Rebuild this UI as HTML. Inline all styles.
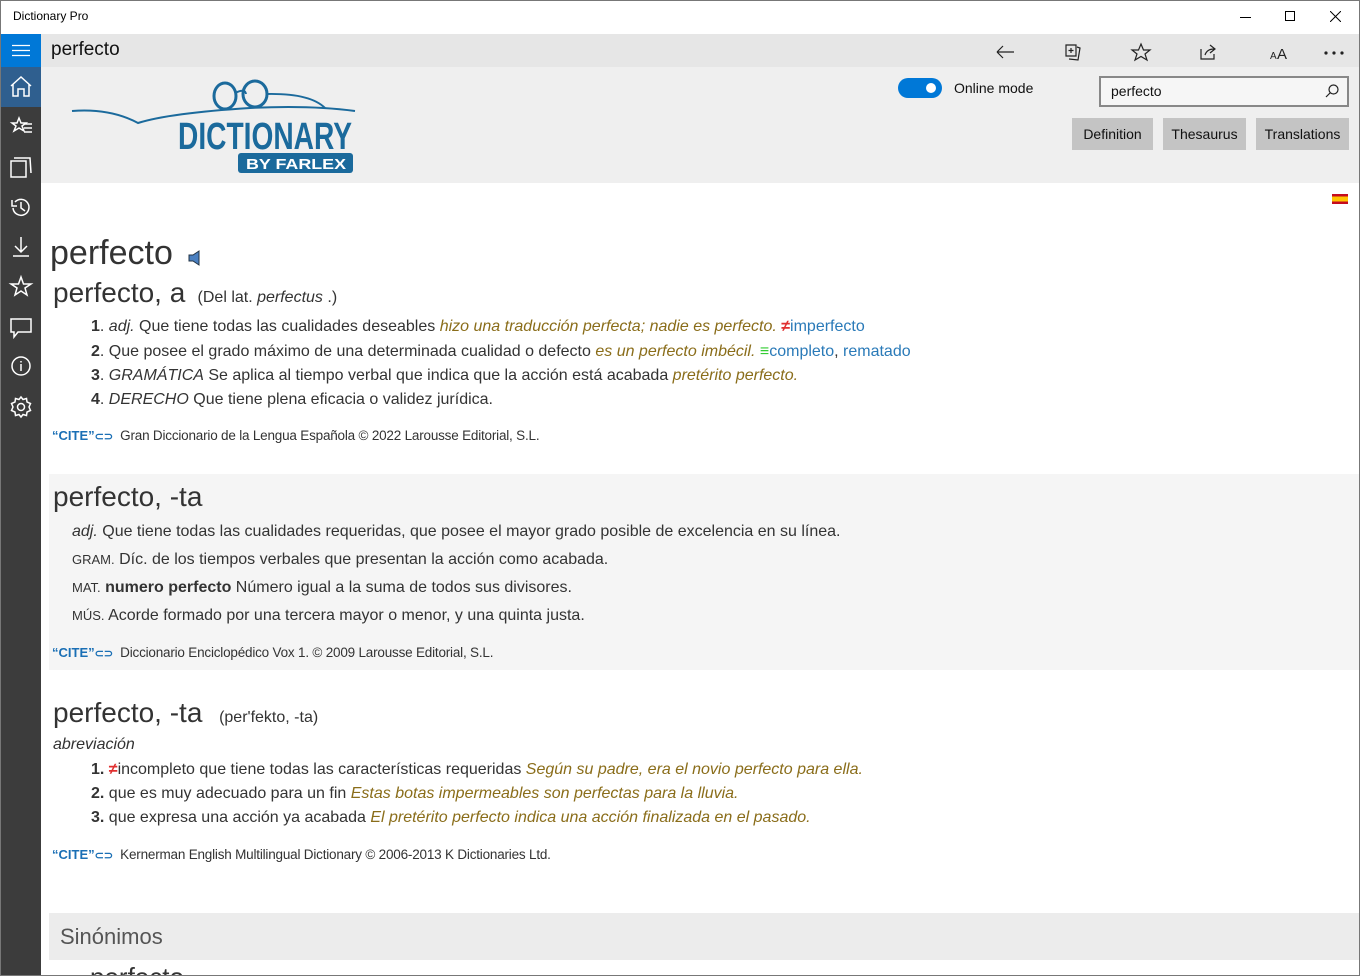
<!DOCTYPE html>
<html><head><meta charset="utf-8"><style>
*{margin:0;padding:0;box-sizing:border-box}
html,body{width:1360px;height:976px;overflow:hidden}
body{font-family:"Liberation Sans",sans-serif;background:#fff;position:relative;color:#333}
.a{position:absolute;white-space:nowrap}
.ui{font-family:"Segoe UI","Liberation Sans",sans-serif}
.ex{color:#8a6d1a;font-style:italic}
.lk{color:#2a7ab8}
.cite{color:#1a6fb5;font-weight:bold;font-size:13px}
.src{font-size:13.5px;color:#333;letter-spacing:-0.2px}
.ln{font-size:16px;color:#333}
</style></head><body>
<div class="a" style="left:0;top:0;width:1360px;height:976px;border:1px solid #777;z-index:9;pointer-events:none"></div>
<div class="a ui" style="left:13px;top:9px;font-size:12px;color:#000">Dictionary Pro</div>
<div class="a" style="left:1240px;top:17px;width:11px;height:1px;background:#000"></div>
<div class="a" style="left:1285px;top:11px;width:10px;height:10px;border:1px solid #000"></div>
<svg class="a" style="left:1330px;top:11px" width="11" height="11"><path d="M0 0L11 11M11 0L0 11" stroke="#000"/></svg>
<div class="a" style="left:0;top:34px;width:41px;height:942px;background:#3c3c3c"></div>
<div class="a" style="left:0;top:34px;width:41px;height:33px;background:#0078d7"></div>
<svg class="a" style="left:12px;top:44px" width="18" height="13"><path d="M0 1.5H18M0 6.5H18M0 11.5H18" stroke="#fff" stroke-width="1.3"/></svg>
<div class="a" style="left:0;top:67px;width:41px;height:40px;background:#2f5f8f"></div>
<svg class="a" style="left:0;top:67px" width="41" height="370" fill="none" stroke="#fff" stroke-width="1.5">
<path d="M11 19L21 10L31 19M13 17V29H18V22H24V29H29V17"/>
<path d="M19 51L21 56H26L22 59L24 64L19 61L14 64L16 59L12 56H17Z M24 57H32M24 61H32M24 65H32"/>
<path d="M11 94H26V110H11Z M14 91H30L31 106"/>
<path d="M13 141A8 8 0 1 0 15 135M12 133V139H17M21 135V141L25 144"/>
<path d="M21 170V185M15 179L21 185L27 179M13 189H29"/>
<path d="M21 210L23.5 217H31L25 221L27 228L21 224L15 228L17 221L11 217H18.5Z"/>
<path d="M11 252H31V265H18L14 270V265H11Z"/>
<circle cx="21" cy="299" r="9"/><path d="M21 297V304M21 294V295.5"/>
<circle cx="21" cy="340" r="3.5"/><path d="M21 330L23 332.5L26.5 331.5L27 335L30.5 336.5L29 340L30.5 343.5L27 345L26.5 348.5L23 347.5L21 350L19 347.5L15.5 348.5L15 345L11.5 343.5L13 340L11.5 336.5L15 335L15.5 331.5L19 332.5Z"/>
</svg>
<div class="a" style="left:41px;top:34px;width:1319px;height:33px;background:#e6e6e6"></div>
<div class="a ui" style="left:51px;top:39px;font-size:19px;color:#111">perfecto</div>
<svg class="a" style="left:990px;top:40px" width="360" height="24" fill="none" stroke="#222" stroke-width="1.2">
<path d="M7 12H24M7 12L13 6M7 12L13 18"/>
<path d="M76 5H86V16H76Z M87 7L90 8L88 20L79 19M81 8V13M78.5 10.5H83.5"/>
<path d="M151 4L153.5 10H160L155 14L157 20L151 16.5L145 20L147 14L142 10H148.5Z"/>
<path d="M211 9V19H224V14M215 15Q217 9 224 9M220 5L225 9L220 13"/>
<text x="280" y="19" font-size="10" fill="#222" stroke="none" font-family="Liberation Sans">A</text><text x="287" y="19" font-size="15" fill="#222" stroke="none" font-family="Liberation Sans">A</text>
<circle cx="336" cy="13" r="1" fill="#222"/><circle cx="344" cy="13" r="1" fill="#222"/><circle cx="352" cy="13" r="1" fill="#222"/>
</svg>
<div class="a" style="left:41px;top:67px;width:1319px;height:116px;background:#efefef"></div>
<svg class="a" style="left:70px;top:78px" width="290" height="100">
<path d="M2 33Q40 30 68 45Q100 35 180 30Q240 27 285 33" fill="none" stroke="#1b6a9c" stroke-width="2"/>
<ellipse cx="155" cy="18" rx="11" ry="13" fill="none" stroke="#1b6a9c" stroke-width="3"/>
<ellipse cx="185" cy="16" rx="12" ry="13" fill="none" stroke="#1b6a9c" stroke-width="3"/>
<path d="M165 15Q175 10 176 16M196 16Q240 15 255 30" fill="none" stroke="#1b6a9c" stroke-width="2"/>
<text x="108" y="71" font-size="38" font-weight="bold" fill="#1b6a9c" font-family="Liberation Sans Narrow,Liberation Sans" textLength="174" lengthAdjust="spacingAndGlyphs">DICTIONARY</text>
<rect x="168" y="75" width="115" height="20" rx="3" fill="#1b6a9c"/>
<text x="176" y="91" font-size="15" font-weight="bold" fill="#fff" font-family="Liberation Sans" textLength="100" lengthAdjust="spacingAndGlyphs">BY FARLEX</text>
</svg>
<div class="a" style="left:898px;top:78px;width:44px;height:20px;border-radius:10px;background:#0078d7"></div>
<div class="a" style="left:926px;top:83px;width:10px;height:10px;border-radius:5px;background:#fff"></div>
<div class="a ui" style="left:954px;top:80px;font-size:14px;color:#111">Online mode</div>
<div class="a" style="left:1099px;top:76px;width:250px;height:31px;border:2px solid #888;background:#f6f6f6"></div>
<div class="a ui" style="left:1111px;top:83px;font-size:14px;color:#111">perfecto</div>
<svg class="a" style="left:1325px;top:84px" width="14" height="14" fill="none" stroke="#222" stroke-width="1.2"><circle cx="8.5" cy="5.5" r="4.5"/><path d="M5.5 8.5L1 13"/></svg>
<div class="a ui" style="left:1072px;top:118px;width:81px;height:32px;background:#c4c4c4;font-size:14px;color:#111;text-align:center;line-height:32px">Definition</div>
<div class="a ui" style="left:1163px;top:118px;width:83px;height:32px;background:#c4c4c4;font-size:14px;color:#111;text-align:center;line-height:32px">Thesaurus</div>
<div class="a ui" style="left:1256px;top:118px;width:93px;height:32px;background:#c4c4c4;font-size:14px;color:#111;text-align:center;line-height:32px">Translations</div>
<div class="a" style="left:1332px;top:194px;width:16px;height:10px;background:linear-gradient(#c60b1e 25%,#ffc400 25%,#ffc400 75%,#c60b1e 75%)"></div>
<div class="a" style="left:50px;top:234px;font-size:34px;color:#333">perfecto</div>
<svg class="a" style="left:188px;top:250px" width="14" height="16"><path d="M1 5H5L11 1V15L5 11H1Z" fill="#4a7fc0" stroke="#234"/></svg>
<div class="a" style="left:53px;top:277px;font-size:28px;color:#333">perfecto, a <span style="font-size:16px">&nbsp;(Del lat. <i>perfectus</i> .)</span></div>
<div class="a ln" style="left:91px;top:318px"><b>1</b>. <i>adj.</i> Que tiene todas las cualidades deseables <span class="ex">hizo una traducción perfecta; nadie es perfecto.</span> <b style="color:#e03030">≠</b><span class="lk">imperfecto</span></div>
<div class="a ln" style="left:91px;top:343px"><b>2</b>. Que posee el grado máximo de una determinada cualidad o defecto <span class="ex">es un perfecto imbécil.</span> <b style="color:#3c3">≡</b><span class="lk">completo</span>, <span class="lk">rematado</span></div>
<div class="a ln" style="left:91px;top:367px"><b>3</b>. <i>GRAMÁTICA</i> Se aplica al tiempo verbal que indica que la acción está acabada <span class="ex">pretérito perfecto.</span></div>
<div class="a ln" style="left:91px;top:391px"><b>4</b>. <i>DERECHO</i> Que tiene plena eficacia o validez jurídica.</div>
<div class="a" style="left:52px;top:427px"><span class="cite">“CITE”</span><span class="cite" style="font-size:11px">⊂⊃</span><span class="src">&nbsp;&nbsp;Gran Diccionario de la Lengua Española © 2022 Larousse Editorial, S.L.</span></div>
<div class="a" style="left:49px;top:474px;width:1311px;height:196px;background:#f5f5f5"></div>
<div class="a" style="left:53px;top:481px;font-size:28px;color:#333">perfecto, -ta</div>
<div class="a ln" style="left:72px;top:523px"><i>adj.</i> Que tiene todas las cualidades requeridas, que posee el mayor grado posible de excelencia en su línea.</div>
<div class="a ln" style="left:72px;top:551px"><span style="font-size:13px">GRAM.</span> Díc. de los tiempos verbales que presentan la acción como acabada.</div>
<div class="a ln" style="left:72px;top:579px"><span style="font-size:13px">MAT.</span> <b>numero perfecto</b> Número igual a la suma de todos sus divisores.</div>
<div class="a ln" style="left:72px;top:607px"><span style="font-size:13px">MÚS.</span> Acorde formado por una tercera mayor o menor, y una quinta justa.</div>
<div class="a" style="left:52px;top:644px"><span class="cite">“CITE”</span><span class="cite" style="font-size:11px">⊂⊃</span><span class="src">&nbsp;&nbsp;Diccionario Enciclopédico Vox 1. © 2009 Larousse Editorial, S.L.</span></div>
<div class="a" style="left:53px;top:697px;font-size:28px;color:#333">perfecto, -ta <span style="font-size:16px">&nbsp;&nbsp;(per'fekto, -ta)</span></div>
<div class="a ln" style="left:53px;top:736px"><i>abreviación</i></div>
<div class="a ln" style="left:91px;top:761px"><b>1.</b> <b style="color:#e03030">≠</b>incompleto que tiene todas las características requeridas <span class="ex">Según su padre, era el novio perfecto para ella.</span></div>
<div class="a ln" style="left:91px;top:785px"><b>2.</b> que es muy adecuado para un fin <span class="ex">Estas botas impermeables son perfectas para la lluvia.</span></div>
<div class="a ln" style="left:91px;top:809px"><b>3.</b> que expresa una acción ya acabada <span class="ex">El pretérito perfecto indica una acción finalizada en el pasado.</span></div>
<div class="a" style="left:52px;top:846px"><span class="cite">“CITE”</span><span class="cite" style="font-size:11px">⊂⊃</span><span class="src">&nbsp;&nbsp;Kernerman English Multilingual Dictionary © 2006-2013 K Dictionaries Ltd.</span></div>
<div class="a" style="left:49px;top:913px;width:1311px;height:47px;background:#ececec"></div>
<div class="a" style="left:60px;top:924px;font-size:22px;color:#555">Sinónimos</div>
<div class="a" style="left:0;top:960px;width:1360px;height:16px;overflow:hidden"><div class="a" style="left:90px;top:2px;font-size:26px;color:#333">perfecto</div></div>
</body></html>
